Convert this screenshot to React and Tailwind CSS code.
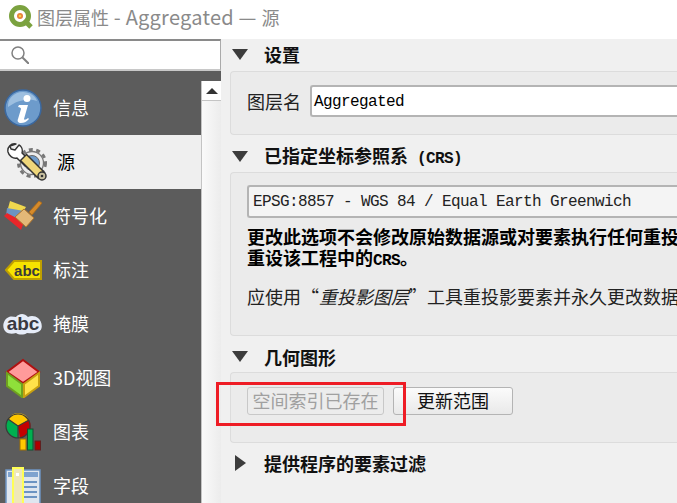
import React from 'react';

const cjk = '"Noto Sans CJK SC", "Liberation Sans", sans-serif';

const InfoIcon = () => (
  <svg width="38" height="38" viewBox="0 0 38 38">
    <circle cx="19" cy="19" r="18" fill="#6d9bcb" stroke="#3a68a0" strokeWidth="1.5" />
    <path d="M4 18a15 14 0 0 1 29-6c-8-3-20-1-29 6z" fill="#9dbfe0" />
    <circle cx="23" cy="9.5" r="3.5" fill="#fff" />
    <path d="M15 16h9l-4 14c0 1 2 1 4-1l1 1c-3 3-5 4-8 4s-4-2-3-4l3-10c0-1-1-2-3-2z" fill="#fff" />
  </svg>
);

const SourceIcon = () => (
  <svg width="40" height="38" viewBox="0 0 40 38">
    <circle cx="25" cy="20" r="11.5" fill="#ececec" stroke="#777" strokeWidth="1.3" />
    <circle cx="25" cy="20" r="13.5" fill="none" stroke="#777" strokeWidth="3" strokeDasharray="4 3.5" />
    <circle cx="25" cy="20" r="7.5" fill="#6d9bcb" stroke="#666" />
    <path d="M9 1C4 0 0 4 1 9c1 4 5 7 9 6l8 8 5-5-8-8c1-4-1-7-3-8l-4 5-4-1-1-3z" fill="#fff" stroke="#333" strokeWidth="1.4" strokeLinejoin="round" />
    <path d="M16 14L35 33" stroke="#333" strokeWidth="10" />
    <path d="M17 15L33 31" stroke="#eed67a" strokeWidth="7" />
    <circle cx="35" cy="33" r="4" fill="#c8c0a0" stroke="#333" strokeWidth="1.5" />
    <circle cx="35" cy="33" r="1.3" fill="#333" />
  </svg>
);

const BrushIcon = () => (
  <svg width="38" height="30" viewBox="0 0 38 30">
    <path d="M6 0l16 6-5 8-14-3z" fill="#f0d84e" />
    <path d="M3 7l17 3-4 9-14-4z" fill="#6d94c2" />
    <path d="M0 15l3-3 17 9-3 8z" fill="#e8262a" />
    <path d="M11 16l9-8 10 9-8 9z" fill="#e3b878" stroke="#b0742a" />
    <path d="M25 11L35 0l3 2-10 12z" fill="#d68a2a" stroke="#a96a18" strokeWidth="0.8" />
  </svg>
);

const LabelIcon = () => (
  <svg width="37" height="20" viewBox="0 0 37 20">
    <path d="M9 1h27v18H9L1 10z" fill="#f7e300" stroke="#bfa000" strokeWidth="2" />
    <text x="22" y="15.5" textAnchor="middle" fontSize="15" fontWeight="700" fill="#3a3a3a" fontFamily="Liberation Sans">abc</text>
  </svg>
);

const MaskIcon = () => (
  <svg width="40" height="22" viewBox="0 0 40 22">
    <path d="M6 4c3-1 5 0 7 0 2-3 8-5 12 0 3-2 8-1 10 1 4 3 6 12 0 14-4 2-8 1-11 1-3 2-8 2-11 0-3 1-8 1-10-1C-1 16-1 7 6 4z" fill="#e6ecf8" />
    <text x="20" y="17" textAnchor="middle" fontSize="19" fontWeight="700" fill="#3a3a42" fontFamily="Liberation Sans">abc</text>
  </svg>
);

const CubeIcon = () => (
  <svg width="36" height="40" viewBox="0 0 36 40">
    <path d="M18 2l16 12-16 11L2 14z" fill="#ff9a9a" stroke="#b01010" strokeWidth="2" />
    <path d="M2 15l15 11v13L2 28z" fill="#8fe03a" stroke="#6fa020" strokeWidth="2" />
    <path d="M34 15L19 26v13l15-11z" fill="#ffe24a" stroke="#c8a010" strokeWidth="2" />
  </svg>
);

const ChartIcon = () => (
  <svg width="36" height="38" viewBox="0 0 36 38">
    <path d="M13 13L3 6a12 12 0 0 1 21 1z" fill="#ffc800" />
    <path d="M13 13L24 7a12 12 0 0 1-9 18z" fill="#c40000" />
    <path d="M13 13v12A12 12 0 0 1 3 6z" fill="#00b050" />
    <circle cx="13" cy="13" r="12" fill="none" stroke="#3a3a3a" strokeWidth="1.2" />
    <path d="M13 13V25M13 13L3 6M13 13L24 7" stroke="#3a3a3a" strokeWidth="1.2" />
    <rect x="15" y="26" width="6" height="11" fill="#ffc800" stroke="#a07000" />
    <rect x="22.5" y="16" width="5.5" height="21" fill="#00b050" stroke="#105030" />
    <rect x="30" y="28" width="5.5" height="9" fill="#b00000" stroke="#602020" />
  </svg>
);

const FieldsIcon = () => (
  <svg width="36" height="38" viewBox="0 0 36 38">
    <rect x="1" y="3" width="34" height="34" fill="#dfe6ef" stroke="#6d94c2" strokeWidth="1.5" />
    <rect x="3" y="5" width="30" height="5" fill="#7fa3cf" />
    <path d="M17 15h15M17 20h15M17 25h15M17 30h15" stroke="#6d94c2" strokeWidth="2" />
    <rect x="8" y="1" width="10" height="37" fill="#efe8b8" stroke="#ffff55" strokeWidth="2" />
    <rect x="11" y="6" width="3" height="3" fill="#fff" />
  </svg>
);

const navItems = [
  { label: '信息', icon: <InfoIcon /> },
  { label: '源', icon: <SourceIcon />, active: true },
  { label: '符号化', icon: <BrushIcon /> },
  { label: '标注', icon: <LabelIcon /> },
  { label: '掩膜', icon: <MaskIcon /> },
  { label: '3D视图', icon: <CubeIcon /> },
  { label: '图表', icon: <ChartIcon /> },
  { label: '字段', icon: <FieldsIcon /> },
];

const Caret = ({ open }) => (
  open
    ? <div className="w-0 h-0 border-l-[8px] border-r-[8px] border-t-[11px] border-l-transparent border-r-transparent border-t-[#3c3c3c]" />
    : <div className="ml-[3px] w-0 h-0 border-t-[8px] border-b-[8px] border-l-[11px] border-t-transparent border-b-transparent border-l-[#3c3c3c]" />
);

const SectionTitle = ({ open = true, children, className = '' }) => (
  <div className={`flex items-center pl-[11px] ${className}`}>
    <div className="w-[32px] shrink-0"><Caret open={open} /></div>
    <span className="text-[18px] font-bold leading-none text-[#111] whitespace-nowrap">{children}</span>
  </div>
);

const App = () => {
  return (
    <div className="relative w-[677px] h-[503px] overflow-hidden bg-white" style={{ fontFamily: cjk }}>
      <div className="flex items-center h-[39px] pl-[8px] pb-[6px] bg-white">
        <svg width="25" height="24" viewBox="0 0 25 24">
          <circle cx="12" cy="11" r="8.5" fill="none" stroke="#7ba23f" strokeWidth="5" />
          <path d="M16 15l7 7" stroke="#7ba23f" strokeWidth="5" />
          <circle cx="12" cy="11" r="3" fill="#e8833a" />
          <circle cx="12" cy="11" r="1.3" fill="#f6d24a" />
        </svg>
        <span className="ml-[4px] text-[18px] leading-none text-[#8a8a8a] whitespace-nowrap">
          图层属性<span className="text-[20px] tracking-[0.25px]"> - Aggregated — </span>源
        </span>
      </div>

      <div className="flex h-[464px]">
        <aside className="w-[221px] shrink-0 flex flex-col">
          <div className="flex shrink-0 items-center h-[32px] bg-white border-t-2 border-t-[#8a8a8a] border-r border-r-[#aaa] border-b-2 border-b-[#c8c8c8] pl-[11px]">
            <svg width="18" height="18" viewBox="0 0 18 18" fill="none" stroke="#808080">
              <circle cx="7" cy="7" r="6" strokeWidth="1.5" />
              <path d="M11.5 11.5L18 18" strokeWidth="2" />
            </svg>
          </div>
          <div className="flex flex-1 min-h-0 overflow-hidden bg-[#5c5c5c]">
            <ul className="w-[201px] shrink-0 pt-[10px]">
              {navItems.map((item) => (
                <li
                  key={item.label}
                  className={`flex items-center h-[54px] ${item.active ? 'bg-[#efefef] text-black pl-[4px]' : 'text-white'}`}
                >
                  <div className="w-[46px] mr-[7px] shrink-0 flex justify-center">{item.icon}</div>
                  <span className="pb-[3px] text-[18px] leading-none whitespace-nowrap">{item.label}</span>
                </li>
              ))}
            </ul>
            <div className="flex-1 flex flex-col mt-[10px] bg-gradient-to-r from-[#fafafa] to-[#ececec] border-l border-l-[#c4c4c4]">
              <div className="flex h-[20px] items-center justify-center bg-white border-b border-b-[#c4c4c4]">
                <div className="w-0 h-0 border-l-[6px] border-r-[6px] border-b-[6px] border-l-transparent border-r-transparent border-b-[#333]" />
              </div>
            </div>
          </div>
        </aside>

        <main className="flex-1 min-w-0 bg-[#f0f0f0] overflow-hidden">
          <SectionTitle className="h-[32px] pb-[2px]">设置</SectionTitle>
          <div className="ml-[9px] h-[64px] flex items-start pl-[16px] pt-[13px] bg-[#ebebeb] border border-[#dcdcdc] border-r-0 rounded-l-sm">
            <span className="h-[32px] flex items-center text-[18px] leading-none text-[#222] whitespace-nowrap">图层名</span>
            <div className="ml-[9px] flex-1 h-[32px] flex items-center pl-[2px] pt-[1px] bg-white border-2 border-[#b4b4b4] border-r-0 rounded-l-[3px] font-['Liberation_Mono'] text-[16px] tracking-[-0.6px] text-black">
              Aggregated
            </div>
          </div>

          <SectionTitle className="h-[37px] pt-[5px]">
            已指定坐标参照系<span className="font-['Liberation_Mono'] text-[16px] tracking-[-0.6px] whitespace-pre"> (CRS)</span>
          </SectionTitle>
          <div className="ml-[9px] h-[164px] pl-[16px] pt-[12px] bg-[#ebebeb] border border-[#dcdcdc] border-r-0 rounded-l-sm overflow-hidden">
            <div className="h-[33px] flex items-center pl-[4px] pt-[1px] bg-[#f4f4f4] border-2 border-[#b4b4b4] border-r-0 rounded-l-[3px] font-['Liberation_Mono'] text-[16px] tracking-[-0.6px] text-[#222] whitespace-nowrap">
              EPSG:8857 - WGS 84 / Equal Earth Greenwich
            </div>
            <div className="mt-[8px] text-[18px] leading-[21px] font-bold text-black whitespace-nowrap">
              <div className="h-[21px]">更改此选项不会修改原始数据源或对要素执行任何重投影</div>
              <div className="h-[21px]">重设该工程中的<span className="font-['Liberation_Mono'] text-[16px] leading-none tracking-[-0.6px]">CRS</span>。</div>
            </div>
            <p className="mt-[18px] text-[18px] leading-[21px] text-[#222] whitespace-nowrap">
              应使用“<em className="italic">重投影图层</em>”工具重投影要素并永久更改数据源
            </p>
          </div>

          <SectionTitle className="h-[36px] pt-[5px]">几何图形</SectionTitle>
          <div className="ml-[9px] h-[71px] flex gap-[9px] pl-[16px] pt-[14px] bg-[#ebebeb] border border-[#dcdcdc] border-r-0 rounded-l-sm">
            <button className="w-[137px] h-[28px] pb-[2px] bg-[#ececec] border border-[#c8c8c8] rounded-[3px] text-[18px] leading-none text-[#a0a0a0] whitespace-nowrap">
              空间索引已存在
            </button>
            <button className="w-[120px] h-[28px] pb-[2px] bg-gradient-to-b from-[#fbfbfb] to-[#e9e9e9] border border-[#b4b4b4] rounded-[3px] text-[18px] leading-none text-[#111]">
              更新范围
            </button>
          </div>

          <SectionTitle open={false} className="h-[40px]">提供程序的要素过滤</SectionTitle>
        </main>
      </div>

      <div className="absolute left-[216px] top-[382px] w-[190px] h-[44px] border-[3px] border-[#ee1c25]" />
    </div>
  );
};

export default App;
